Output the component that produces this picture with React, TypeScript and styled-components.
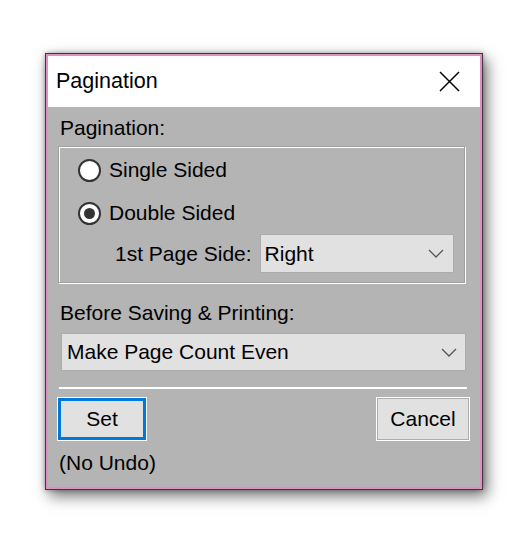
import React from 'react';
import styled, { createGlobalStyle } from 'styled-components';

const GlobalStyle = createGlobalStyle`
    html, body {
        margin: 0;
        background: #fff;
        font-family: "Liberation Sans", Arial, sans-serif;
        color: #000;
    }
`;

const Page = styled.div`
    height: 543px;
    box-sizing: border-box;
    padding: 53px 0 0 45px;
    overflow: hidden;
`;

const Window = styled.div`
    width: 438px;
    height: 437px;
    box-sizing: border-box;
    border: 1px solid #3a3a3a;
    background: #e08fc2;
    padding: 2px;
    box-shadow: 4px 6px 14px rgba(0, 0, 0, 0.55), 0 0 5px rgba(0, 0, 0, 0.3);
`;

const Frame = styled.div`
    height: 100%;
    display: flex;
    flex-direction: column;
`;

const TitleBar = styled.div`
    height: 51px;
    flex: none;
    background: #fff;
    display: flex;
    align-items: center;
    justify-content: space-between;
    padding: 0 20px 0 8px;
    font-size: 21.5px;
`;

const Body = styled.div`
    flex: 1;
    background: #b4b4b4;
    padding: 9px 11px 0 10px;
    display: flex;
    flex-direction: column;
    font-size: 21px;
    line-height: 24px;
`;

const Label = styled.div<{ $top?: number; $left?: number }>`
    margin-top: ${p => p.$top || 0}px;
    padding-left: ${p => p.$left ?? 2}px;
    white-space: nowrap;
`;

const GroupBox = styled.div`
    margin: 6px 4px 0 0;
    height: 137px;
    box-sizing: border-box;
    border: 1px solid #a0a0a0;
    box-shadow: inset 1px 1px 0 #fff, 1px 1px 0 #fff;
    padding: 11px 10px 0 19px;
    display: flex;
    flex-direction: column;
`;

const RadioRow = styled.div<{ $top?: number }>`
    display: flex;
    align-items: center;
    height: 24px;
    gap: 8px;
    margin-top: ${p => p.$top || 0}px;
`;

const Radio = styled.span<{ $checked?: boolean }>`
    width: 23px;
    height: 23px;
    box-sizing: border-box;
    border-radius: 50%;
    border: 2px solid #333;
    background: #fff;
    display: flex;
    align-items: center;
    justify-content: center;
    &::after {
        content: '';
        width: 11px;
        height: 11px;
        border-radius: 50%;
        background: #333;
        display: ${p => (p.$checked ? 'block' : 'none')};
    }
`;

const SideRow = styled.div`
    display: flex;
    align-items: center;
    gap: 8px;
    margin: 9px 0 0 37px;
`;

const Select = styled.div<{ $padLeft: number; $padRight: number }>`
    flex: 1;
    height: 39px;
    box-sizing: border-box;
    background: #e1e1e1;
    border: 1px solid #acacac;
    display: flex;
    align-items: center;
    justify-content: space-between;
    padding: 0 ${p => p.$padRight}px 0 ${p => p.$padLeft}px;
`;

const WideSelect = styled(Select)`
    flex: none;
    height: 38px;
    margin: 8px 3px 0 3px;
`;

const Separator = styled.div`
    height: 2px;
    background: #fff;
    margin: 16px 2px 0 1px;
`;

const ButtonRow = styled.div`
    display: flex;
    justify-content: space-between;
    margin-top: 9px;
`;

const Button = styled.div<{ $primary?: boolean; $width: number }>`
    width: ${p => p.$width}px;
    height: 42px;
    box-sizing: border-box;
    background: #e1e1e1;
    display: flex;
    align-items: center;
    justify-content: center;
    border: ${p => (p.$primary ? '3px solid #0078d7' : '1px solid #adadad')};
    box-shadow: 0 0 0 1px #fff;
`;

const Chevron = () => (
    <svg width="16" height="9" viewBox="0 0 16 9">
        <polyline points="1,1 8,8 15,1" fill="none" stroke="#555" strokeWidth="1.3" />
    </svg>
);

const CloseIcon = () => (
    <svg width="21" height="21" viewBox="0 0 21 21">
        <path d="M1 1 L20 20 M20 1 L1 20" stroke="#000" strokeWidth="1.5" />
    </svg>
);

const App = () => {
    return (
        <>
            <GlobalStyle />
            <Page>
                <Window>
                    <Frame>
                        <TitleBar>
                            <span>Pagination</span>
                            <CloseIcon />
                        </TitleBar>
                        <Body>
                            <Label>Pagination:</Label>
                            <GroupBox>
                                <RadioRow>
                                    <Radio />
                                    <span>Single Sided</span>
                                </RadioRow>
                                <RadioRow $top={19}>
                                    <Radio $checked />
                                    <span>Double Sided</span>
                                </RadioRow>
                                <SideRow>
                                    <span>1st Page Side:</span>
                                    <Select $padLeft={4} $padRight={9}>
                                        <span>Right</span>
                                        <Chevron />
                                    </Select>
                                </SideRow>
                            </GroupBox>
                            <Label $top={18}>Before Saving &amp; Printing:</Label>
                            <WideSelect $padLeft={5} $padRight={8}>
                                <span>Make Page Count Even</span>
                                <Chevron />
                            </WideSelect>
                            <Separator />
                            <ButtonRow>
                                <Button $primary $width={88}>Set</Button>
                                <Button $width={92}>Cancel</Button>
                            </ButtonRow>
                            <Label $top={11} $left={1}>(No Undo)</Label>
                        </Body>
                    </Frame>
                </Window>
            </Page>
        </>
    );
};

export default App;
